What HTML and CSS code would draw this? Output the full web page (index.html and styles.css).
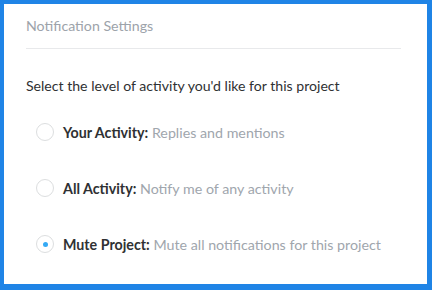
FILE: index.html
```html
<!DOCTYPE html>
<html>
<head>
<meta charset="utf-8">
<link rel="stylesheet" href="styles.css">
</head>
<body>
<div class="panel">
  <div class="header">Notification Settings</div>
  <div class="content">
    <p class="intro">Select the level of activity you'd like for this project</p>
    <div class="options">
      <label class="option">
        <span class="radio"></span>
        <span class="text"><b>Your Activity:</b> <span class="desc">Replies and mentions</span></span>
      </label>
      <label class="option">
        <span class="radio"></span>
        <span class="text"><b>All Activity:</b> <span class="desc">Notify me of any activity</span></span>
      </label>
      <label class="option">
        <span class="radio checked"></span>
        <span class="text"><b>Mute Project:</b> <span class="desc">Mute all notifications for this project</span></span>
      </label>
    </div>
  </div>
</div>
</body>
</html>
```
FILE: styles.css
```css
html, body {
  margin: 0;
  padding: 0;
  height: 100%;
}
body {
  background: #1f84e6;
  font-family: Lato, "Open Sans", sans-serif;
  padding: 4px 5px 6px 4px;
  box-sizing: border-box;
}
.panel {
  background: #fff;
  height: 100%;
  padding: 0 26px 0 22px;
  box-sizing: border-box;
}
.header {
  font-size: 14.2px;
  color: #9da3aa;
  height: 45px;
  line-height: 43px;
  border-bottom: 1px solid #e8e9eb;
  box-sizing: border-box;
}
.intro {
  margin: 0;
  padding-top: 27px;
  font-size: 14.1px;
  line-height: 20px;
  color: #2f3133;
}
.options {
  display: flex;
  flex-direction: column;
  padding-top: 8px;
  padding-left: 10px;
}
.option {
  display: flex;
  align-items: center;
  gap: 9px;
  height: 56px;
  font-size: 14.25px;
}
.option b {
  color: #2f3133;
  font-weight: 700;
}
.desc {
  color: #a0a6ad;
}
.radio {
  width: 16px;
  height: 16px;
  border: 1px solid #dcdedf;
  border-radius: 50%;
  display: flex;
  align-items: center;
  justify-content: center;
  flex: none;
}
.radio.checked::after {
  content: "";
  width: 5px;
  height: 5px;
  border-radius: 50%;
  background: #35aaf5;
}
```
